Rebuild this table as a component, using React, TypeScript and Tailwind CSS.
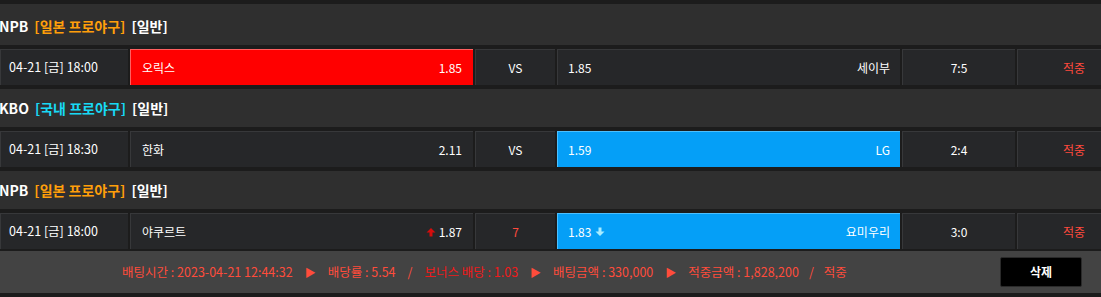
const font = { fontFamily: '"Noto Sans CJK KR", "Noto Sans", sans-serif' }

type Side = 'red' | 'blue' | 'none'

type Game = {
  league: string
  leagueName: string
  leagueColor: string
  date: string
  home: string
  homeOdds: string
  homeUp?: boolean
  mid: string
  midRed?: boolean
  awayOdds: string
  awayDown?: boolean
  away: string
  score: string
  pick: Side
  headerH: string
}

const games: Game[] = [
  {
    league: 'NPB',
    leagueName: '[일본 프로야구]',
    leagueColor: 'text-[#ff9f0a]',
    date: '04-21 [금] 18:00',
    home: '오릭스',
    homeOdds: '1.85',
    mid: 'VS',
    awayOdds: '1.85',
    away: '세이부',
    score: '7:5',
    pick: 'red',
    headerH: 'h-[41px] pt-[4px]',
  },
  {
    league: 'KBO',
    leagueName: '[국내 프로야구]',
    leagueColor: 'text-[#18d9f5]',
    date: '04-21 [금] 18:30',
    home: '한화',
    homeOdds: '2.11',
    mid: 'VS',
    awayOdds: '1.59',
    away: 'LG',
    score: '2:4',
    pick: 'blue',
    headerH: 'h-[38px]',
  },
  {
    league: 'NPB',
    leagueName: '[일본 프로야구]',
    leagueColor: 'text-[#ff9f0a]',
    date: '04-21 [금] 18:00',
    home: '야쿠르트',
    homeOdds: '1.87',
    homeUp: true,
    mid: '7',
    midRed: true,
    awayOdds: '1.83',
    awayDown: true,
    away: '요미우리',
    score: '3:0',
    pick: 'blue',
    headerH: 'h-[38px]',
  },
]

const cell = 'bg-[#262729] border-t border-l border-[#37383a] flex items-center'

function UpArrow() {
  return (
    <svg width="10" height="10" viewBox="0 0 10 10" className="mr-[3px]">
      <path d="M5 1 L9.5 5.5 H6.5 V9.5 H3.5 V5.5 H0.5 Z" fill="#d40d0d" />
    </svg>
  )
}

function DownArrow() {
  return (
    <svg width="10" height="10" viewBox="0 0 10 10" className="ml-[4px]">
      <path d="M5 9 L9.5 4.5 H6.5 V0.5 H3.5 V4.5 H0.5 Z" fill="#a8ecff" />
    </svg>
  )
}

function GameBlock({ g }: { g: Game }) {
  const homeCls =
    g.pick === 'red'
      ? 'bg-[#ff0000] border-t border-l border-[#ff6060] flex items-center'
      : cell
  const awayCls =
    g.pick === 'blue'
      ? 'bg-[#059ff7] border-t border-l border-[#4cc0ff] flex items-center'
      : cell

  return (
    <>
      <div className={`${g.headerH} bg-[#2f2f2f] flex items-center -ml-[1px] text-[14px] font-bold text-white`}>
        <span>{g.league}</span>
        <span className={`ml-[6px] ${g.leagueColor}`}>{g.leagueName}</span>
        <span className="ml-[6px]">[일반]</span>
      </div>
      <div className="h-[4px]" />
      <div className="h-[36px] grid grid-cols-[128px_343px_80px_343px_113px_1fr] gap-x-[2px] text-[12px] text-white">
        <div className={`${cell} pl-[8px] text-[12.5px]`}>{g.date}</div>
        <div className={`${homeCls} px-[11px] justify-between`}>
          <span>{g.home}</span>
          <span className="flex items-center">
            {g.homeUp && <UpArrow />}
            {g.homeOdds}
          </span>
        </div>
        <div className={`${cell} justify-center ${g.midRed ? 'text-[#ff4a3d]' : ''}`}>{g.mid}</div>
        <div className={`${awayCls} px-[10px] justify-between`}>
          <span className="flex items-center">
            {g.awayOdds}
            {g.awayDown && <DownArrow />}
          </span>
          <span>{g.away}</span>
        </div>
        <div className={`${cell} justify-center`}>{g.score}</div>
        <div className={`${cell} justify-end pr-[16px] text-[#ff4a3d]`}>적중</div>
      </div>
      <div className="h-[4px]" />
    </>
  )
}

export default function App() {
  return (
    <div className="w-[1101px] h-[297px] bg-[#1c1c1c] overflow-hidden" style={font}>
      <div className="h-[4px]" />
      {games.map((g, i) => (
        <GameBlock key={i} g={g} />
      ))}
      <div className="-mt-[2px] h-[42px] bg-[#434343] flex items-center text-[12.5px] text-[#ff4c3b]">
        <div className="w-[1000px] shrink-0 flex items-center pl-[122px] whitespace-pre">
          <span>배팅시간 : 2023-04-21 12:44:32</span>
          <span className="mx-[12px] text-[11px]">▶</span>
          <span>배당률 : 5.54</span>
          <span className="mx-[12px]">/</span>
          <span className="text-[#f01a1a]">보너스 배당 : 1.03</span>
          <span className="mx-[12px] text-[11px]">▶</span>
          <span>배팅금액 : 330,000</span>
          <span className="mx-[12px] text-[11px]">▶</span>
          <span>적중금액 : 1,828,200</span>
          <span className="mx-[10px]">/</span>
          <span>적중</span>
        </div>
        <button className="w-[82px] h-[30px] bg-black border border-[#2a2a2a] rounded-[2px] text-white text-[12px] font-bold">
          삭제
        </button>
      </div>
    </div>
  )
}
